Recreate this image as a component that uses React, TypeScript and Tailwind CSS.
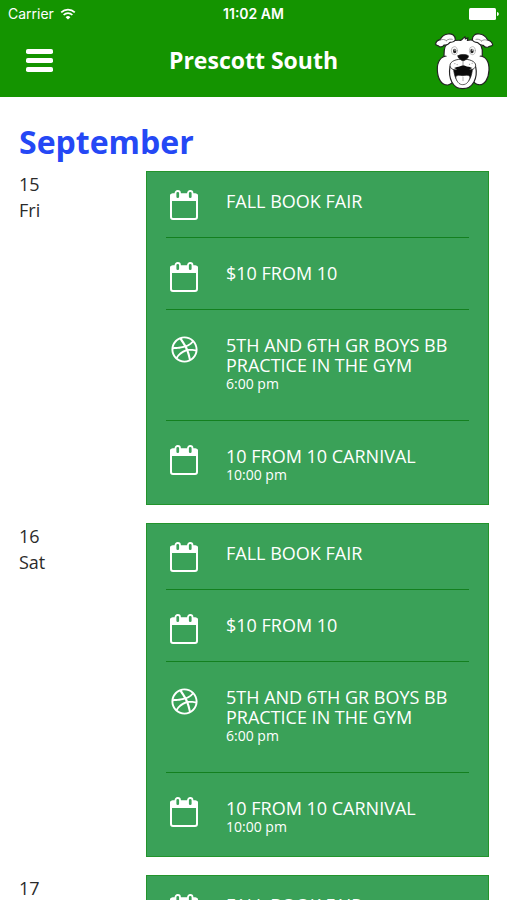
import { FaDribbble } from "react-icons/fa";

type Event = {
  title: string;
  time?: string;
  icon: "calendar" | "ball";
};

type Day = {
  date: number;
  weekday: string;
  events: Event[];
};

const events: Event[] = [
  { title: "FALL BOOK FAIR", icon: "calendar" },
  { title: "$10 FROM 10", icon: "calendar" },
  { title: "5TH AND 6TH GR BOYS BB PRACTICE IN THE GYM", time: "6:00 pm", icon: "ball" },
  { title: "10 FROM 10 CARNIVAL", time: "10:00 pm", icon: "calendar" },
];

const days: Day[] = [
  { date: 15, weekday: "Fri", events },
  { date: 16, weekday: "Sat", events },
  { date: 17, weekday: "Sun", events },
];

function CalendarIcon() {
  return (
    <svg width="28" height="30" viewBox="0 0 28 30" fill="none" aria-hidden="true">
      <rect x="1" y="4.5" width="26" height="24.5" rx="2" stroke="white" strokeWidth="2" />
      <path d="M0 6a2.500 2.500 0 0 1 2.500-2.500h23a2.500 2.500 0 0 1 2.500 2.500v5H0z" fill="white" />
      <rect x="5.5" y="1" width="4.5" height="8" rx="2.200" fill="#3aa158" stroke="white" strokeWidth="1.800" />
      <rect x="18" y="1" width="4.5" height="8" rx="2.200" fill="#3aa158" stroke="white" strokeWidth="1.800" />
    </svg>
  );
}

function WifiIcon() {
  return (
    <svg width="16" height="12" viewBox="0 0 16 12" fill="none" aria-hidden="true">
      <path d="M1.2 4.4a9.8 9.8 0 0 1 13.6 0" stroke="white" strokeWidth="1.7" />
      <path d="M3.6 7a6.3 6.3 0 0 1 8.8 0" stroke="white" strokeWidth="1.7" />
      <path d="M8 11.6 5.6 9.2a3.4 3.4 0 0 1 4.8 0z" fill="white" />
    </svg>
  );
}

function BatteryIcon() {
  return (
    <svg width="30" height="12" viewBox="0 0 30 12" fill="white" aria-hidden="true">
      <rect width="27" height="12" rx="1.5" />
      <path d="M28 4c1.300 .3 1.800 1 1.800 2s-.5 1.700-1.800 2z" />
    </svg>
  );
}

function Bulldog() {
  return (
    <svg
      width="60"
      height="59"
      viewBox="12 9 180 177"
      fill="white"
      stroke="#222"
      strokeWidth="3.5"
      strokeLinejoin="round"
      strokeLinecap="round"
      role="img"
      aria-label="Bulldog mascot"
    >
      {/* Head */}
      <path d="M44 100C40 76 42 56 52 46C64 38 80 36 92 37C98 36 98 30 105 26L106 33L114 29L112 37C124 35 138 37 147 44C158 56 160 76 153 98Z" />
      {/* Cheeks */}
      <path d="M52 84C32 84 21 102 22 126C23 152 34 172 54 171C70 168 80 148 80 124C80 100 70 84 52 84Z" />
      <path d="M148 84C168 84 178 102 177 126C176 152 164 172 146 170C130 168 120 148 120 124C120 100 130 84 148 84Z" />
      <path stroke="none" d="M47 78H151L146 96L126 112H74L54 96Z" />
      {/* Ears */}
      <path d="M76 35C76 23 66 16 54 18C43 19 35 26 30 35C23 37 17 43 17 49C20 53 25 52 28 56C34 58 39 56 42 51C50 53 56 48 60 43C67 43 74 41 76 35Z" />
      <path d="M127 35C127 23 136 16 148 18C160 19 168 26 173 36C181 38 187 44 188 51C185 56 179 53 175 57C168 59 163 57 160 52C152 53 147 49 143 44C136 43 129 41 127 35Z" />
      <path d="M31 36C38 33 44 34 49 38M49 38C55 32 62 33 67 34M172 37C165 34 159 35 155 39M155 39C148 33 142 33 138 34" fill="none" stroke="#666" strokeWidth="2" />
      {/* Jaw */}
      <path d="M60 116C54 150 68 182 98 182C129 182 144 150 137 116C134 98 64 98 60 116Z" />
      {/* Mouth */}
      <path fill="#0b0b0b" strokeWidth="2" d="M70 117C72 148 82 168 98 168C116 168 126 148 128 117C120 124 108 124 100 117C90 124 78 124 70 117Z" />
      <path strokeWidth="2" d="M77 146C82 140 90 142 98 143C107 142 115 140 120 146C118 160 110 170 98 170C87 170 79 160 77 146Z" />
      <path fill="none" stroke="#888" strokeWidth="2" d="M99 148V158" />
      {/* Muzzle */}
      <path strokeWidth="2.500" d="M98 94C80 92 60 100 60 112C61 124 74 129 84 123C90 120 94 118 99 118C104 118 108 120 114 123C125 128 136 123 137 112C137 100 117 92 98 94Z" />
      <path fill="#0b0b0b" stroke="none" d="M72 120L80 124L86 132L91 122L99 131L107 122L113 132L119 124L127 120L117 116C110 117 105 113 99 112C93 113 88 117 81 117Z" />
      <path fill="none" stroke="#666" strokeWidth="2" d="M99 97V111M74 107H75M81 110H82M118 109H119M126 106H127" />
      {/* Nose */}
      <path fill="#0b0b0b" strokeWidth="2" d="M84 83C89 78 110 78 115 83C117 88 112 91 107 95C103 99 96 99 92 95C88 91 82 89 84 83Z" />
      {/* Eyes */}
      <ellipse cx="73" cy="68" rx="9" ry="12" stroke="#999" strokeWidth="2" />
      <ellipse cx="127" cy="68" rx="9" ry="12" stroke="#999" strokeWidth="2" />
      <ellipse cx="74" cy="69" rx="5" ry="7" fill="#222" stroke="none" />
      <ellipse cx="126" cy="69" rx="5" ry="7" fill="#222" stroke="none" />
      <circle cx="75" cy="66" r="2" stroke="none" />
      <circle cx="127" cy="66" r="2" stroke="none" />
    </svg>
  );
}

function Header() {
  return (
    <header className="shrink-0 bg-[#149400] text-white">
      <div className="grid grid-cols-3 items-center h-7 px-2 font-['Inter',sans-serif] text-sm">
        <div className="flex items-center gap-1.5">
          <span>Carrier</span>
          <WifiIcon />
        </div>
        <span className="text-center font-semibold">11:02 AM</span>
        <div className="flex justify-end">
          <BatteryIcon />
        </div>
      </div>
      <div className="grid grid-cols-[60px_1fr_60px] items-center h-[69px] px-[13px] pb-1">
        <button type="button" aria-label="Menu" className="justify-self-center pr-2">
          <svg width="27" height="23" viewBox="0 0 27 23" fill="white" aria-hidden="true">
            <rect width="27" height="5" rx="1.800" />
            <rect y="9" width="27" height="5" rx="1.800" />
            <rect y="18" width="27" height="5" rx="1.800" />
          </svg>
        </button>
        <h1 className="text-center text-[23px] leading-8 font-bold pb-0.5">Prescott South</h1>
        <Bulldog />
      </div>
    </header>
  );
}

function EventRow({ event }: { event: Event }) {
  return (
    <li className="flex pt-6 first:pt-[18px] pb-[17px] last:pb-[10px] border-b border-[#13801f] last:border-b-0">
      <div className="flex items-center justify-center w-9 h-[30px] mr-6 shrink-0">
        {event.icon === "ball" ? <FaDribbble size={27} /> : <CalendarIcon />}
      </div>
      <div className="pt-px">
        <p className="text-lg leading-5">{event.title}</p>
        {event.time && <p className="text-sm leading-[18px] mb-[10px]">{event.time}</p>}
      </div>
    </li>
  );
}

export default function App() {
  return (
    <div className="flex flex-col h-screen bg-white font-['Open_Sans',sans-serif] text-[#2b2b2b]">
      <Header />
      <main className="flex-1 min-h-0 overflow-y-auto [scrollbar-width:none] pl-[19px] pr-[18px] pt-[25px]">
        <h2 className="text-[32px] leading-10 font-bold text-[#2548f5] mb-[9px]">September</h2>
        {days.map((day) => (
          <section key={day.date} className="flex items-start mb-[18px]">
            <div className="w-[127px] shrink-0 text-lg leading-[26px]">
              <p>{day.date}</p>
              <p>{day.weekday}</p>
            </div>
            <ul className="flex-1 px-[19px] bg-[#3aa158] border border-[#23942c] text-white">
              {day.events.map((event) => (
                <EventRow key={event.title} event={event} />
              ))}
            </ul>
          </section>
        ))}
      </main>
    </div>
  );
}
